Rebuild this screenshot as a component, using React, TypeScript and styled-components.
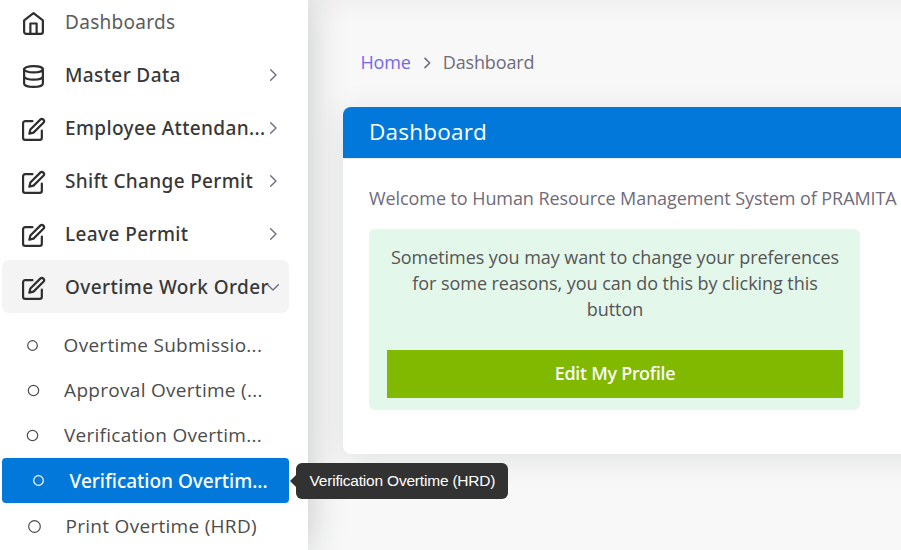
import React from "react";
import styled, { createGlobalStyle, css } from "styled-components";

const GlobalStyle = createGlobalStyle`
  * { box-sizing: border-box; }
  html, body { margin: 0; height: 100%; overflow: hidden; }
  body { background: #f8f8f8; font-family: "Open Sans", "Noto Sans", sans-serif; }
`;

const Page = styled.div`
  display: flex;
  width: 901px;
  height: 550px;
  overflow: hidden;
`;

const Sidebar = styled.nav`
  position: relative;
  z-index: 2;
  flex: 0 0 308px;
  height: 550px;
  padding-left: 2px;
  background: #fff;
  box-shadow: 0 0 36px 0 rgba(20, 32, 30, 0.23);
`;

const MenuList = styled.div`
  display: flex;
  flex-direction: column;
  width: 287px;
  margin-top: -5px;
`;

const MenuRow = styled.a<{ $open?: boolean }>`
  display: flex;
  align-items: center;
  height: 53px;
  padding: 0 8px 0 19px;
  border-radius: 7px;
  background: ${(p) => (p.$open ? "#f4f4f4" : "transparent")};
  color: #333;
`;

const MenuIcon = styled.svg`
  flex: none;
  width: 25px;
  height: 25px;
  margin: 3px 19px 0 0;
  fill: none;
  stroke: #2e2e2e;
  stroke-width: 2.1;
  stroke-linecap: round;
  stroke-linejoin: round;
`;

const MenuLabel = styled.span<{ $light?: boolean; $spacing?: number }>`
  flex: 1;
  white-space: nowrap;
  font-family: "Noto Sans", "Open Sans", sans-serif;
  font-size: 19px;
  line-height: 26px;
  font-weight: ${(p) => (p.$light ? 400 : 500)};
  color: ${(p) => (p.$light ? "#5c5c5c" : "#383838")};
  letter-spacing: ${(p) => p.$spacing ?? 0.35}px;
`;

const Chevron = styled.svg`
  flex: none;
  width: 16px;
  height: 16px;
  margin-left: -20px;
  fill: none;
  stroke: #6e6b7b;
  stroke-width: 2;
  stroke-linecap: round;
  stroke-linejoin: round;
`;

const SubList = styled.div`
  display: flex;
  flex-direction: column;
  width: 287px;
  margin-top: 10px;
`;

const SubRow = styled.a<{ $active?: boolean; $shift: number }>`
  display: flex;
  align-items: center;
  height: 45px;
  padding-left: ${(p) => 24 + p.$shift}px;
  color: #4c4c4c;
  ${(p) =>
    p.$active &&
    css`
      margin-bottom: 1px;
      border-radius: 4px;
      background: #0279da;
      color: #fff;
    `}
`;

const Bullet = styled.svg`
  flex: 0 0 13px;
  width: 13px;
  height: 13px;
  margin: -1px 25px 0 0;
  fill: none;
  stroke: currentColor;
  stroke-width: 1.2;
`;

const SubLabel = styled.span<{ $bold?: boolean; $spacing: number }>`
  white-space: nowrap;
  font-family: ${(p) => (p.$bold ? '"Noto Sans", "Open Sans"' : '"Open Sans", "Noto Sans"')}, sans-serif;
  font-size: 19px;
  line-height: 26px;
  margin-left: -0.4px;
  padding-bottom: ${(p) => (p.$bold ? 0 : 2)}px;
  font-weight: ${(p) => (p.$bold ? 500 : 400)};
  letter-spacing: ${(p) => p.$spacing}px;
`;

const Tooltip = styled.div`
  position: absolute;
  left: 296px;
  top: 463px;
  width: 212px;
  height: 36px;
  padding-left: 13.5px;
  border-radius: 6px;
  background: #323232;
  color: #fff;
  font: 15.5px/35px "Liberation Sans", Arial, sans-serif;
  letter-spacing: -0.2px;
  white-space: nowrap;
  &::before {
    content: "";
    position: absolute;
    left: -6px;
    top: 12px;
    border: 6px solid transparent;
    border-left: 0;
    border-right-color: #323232;
  }
`;

const Main = styled.main`
  flex: 1;
  min-width: 0;
  padding: 49px 0 0 35px;
  background: linear-gradient(#f1f1f1, #f8f8f8 24px);
`;

const Breadcrumb = styled.div`
  display: flex;
  align-items: center;
  height: 26px;
  margin: 0 0 32px 17.5px;
  font-size: 18px;
  line-height: 26px;
  letter-spacing: -0.15px;
  color: #6e6b7b;
`;

const HomeLink = styled.a`
  color: #7367f0;
`;

const CrumbArrow = styled.svg`
  width: 16px;
  height: 16px;
  margin: 1px 8px 0;
  fill: none;
  stroke: #6e6b7b;
  stroke-width: 2.4;
  stroke-linecap: round;
  stroke-linejoin: round;
`;

const Card = styled.section`
  width: 620px;
  height: 347px;
  border-radius: 8px;
  background: #fff;
  box-shadow: 0 5px 32px rgba(20, 32, 30, 0.11);
`;

const CardHeader = styled.h1`
  height: 51px;
  margin: 0;
  padding-left: 26px;
  border-radius: 8px 8px 0 0;
  background: #0279da;
  box-shadow: 0 1px 0 #ebe9f1;
  color: #fff;
  font-size: 22.5px;
  font-weight: 400;
  line-height: 50px;
  letter-spacing: 0.22px;
`;

const CardBody = styled.div`
  padding: 27px 26px 0;
`;

const Welcome = styled.p`
  margin: 0 0 18px;
  font-size: 18px;
  line-height: 26px;
  letter-spacing: -0.08px;
  color: #6e6b7b;
  white-space: nowrap;
`;

const Notice = styled.div`
  width: 491px;
  height: 181px;
  padding: 15px 17px 0 18px;
  border-radius: 6px;
  background: #e4f7eb;
`;

const NoticeText = styled.p`
  margin: 0 0 28px;
  color: #555;
  font-size: 18px;
  line-height: 26px;
  letter-spacing: -0.06px;
  text-align: center;
`;

const ProfileButton = styled.button`
  display: block;
  width: 456px;
  height: 48px;
  padding: 0 0 2px;
  border: 0;
  background: #81b900;
  color: #fff;
  font-family: "Noto Sans", "Open Sans", sans-serif;
  font-size: 18px;
  font-weight: 500;
  line-height: 26px;
  letter-spacing: -0.22px;
`;

const HomeIcon = () => (
  <MenuIcon viewBox="0 0 24 24">
    <path d="M3 9l9-7 9 7v11a2 2 0 0 1-2 2H5a2 2 0 0 1-2-2z" />
    <path d="M9 22V12h6v10" />
  </MenuIcon>
);

const DatabaseIcon = () => (
  <MenuIcon viewBox="0 0 24 24">
    <ellipse cx="12" cy="5" rx="9" ry="3" />
    <path d="M21 12c0 1.66-4 3-9 3s-9-1.34-9-3" />
    <path d="M3 5v14c0 1.66 4 3 9 3s9-1.34 9-3V5" />
  </MenuIcon>
);

const EditIcon = () => (
  <MenuIcon viewBox="0 0 24 24">
    <path d="M11 4H4a2 2 0 0 0-2 2v14a2 2 0 0 0 2 2h14a2 2 0 0 0 2-2v-7" />
    <path d="M18.5 2.5a2.121 2.121 0 0 1 3 3L12 15l-4 1 1-4 9.5-9.5z" />
  </MenuIcon>
);

const menu = [
  { label: "Dashboards", icon: HomeIcon, light: true, spacing: 0.3 },
  { label: "Master Data", icon: DatabaseIcon, arrow: "right", spacing: 0.38 },
  { label: "Employee Attendan...", icon: EditIcon, arrow: "right", spacing: 0.36 },
  { label: "Shift Change Permit", icon: EditIcon, arrow: "right", spacing: 0.33 },
  { label: "Leave Permit", icon: EditIcon, arrow: "right", spacing: 0.4 },
  { label: "Overtime Work Order", icon: EditIcon, arrow: "down", spacing: 0.42, open: true },
];

const submenu = [
  { label: "Overtime Submissio...", shift: 0, size: 4.8, spacing: 0.27 },
  { label: "Approval Overtime (...", shift: 0.5, size: 5.2, spacing: 0.29 },
  { label: "Verification Overtim...", shift: 0.3, size: 5.2, spacing: 0.27 },
  { label: "Verification Overtim...", shift: 6, size: 4.8, spacing: 0, active: true },
  { label: "Print Overtime (HRD)", shift: 1.9, size: 5.8, spacing: 0.29 },
];

export default function App() {
  return (
    <>
      <GlobalStyle />
      <Page>
        <Sidebar>
          <MenuList>
            {menu.map(({ label, icon: Icon, light, arrow, spacing, open }) => (
              <MenuRow key={label} $open={open}>
                <Icon />
                <MenuLabel $light={light} $spacing={spacing}>{label}</MenuLabel>
                {arrow && (
                  <Chevron viewBox="0 0 24 24">
                    <path d={arrow === "down" ? "M4 8.5l8 8 8-8" : "M8.5 4l8 8-8 8"} />
                  </Chevron>
                )}
              </MenuRow>
            ))}
          </MenuList>
          <SubList>
            {submenu.map((item, i) => (
              <SubRow key={i} $active={item.active} $shift={item.shift}>
                <Bullet viewBox="0 0 13 13">
                  <circle cx="6.5" cy="6.5" r={item.size} />
                </Bullet>
                <SubLabel $bold={item.active} $spacing={item.spacing}>{item.label}</SubLabel>
              </SubRow>
            ))}
          </SubList>
          <Tooltip role="tooltip">Verification Overtime (HRD)</Tooltip>
        </Sidebar>
        <Main>
          <Breadcrumb>
            <HomeLink>Home</HomeLink>
            <CrumbArrow viewBox="0 0 24 24">
              <path d="M9 5l7 7-7 7" />
            </CrumbArrow>
            <span>Dashboard</span>
          </Breadcrumb>
          <Card>
            <CardHeader>Dashboard</CardHeader>
            <CardBody>
              <Welcome>Welcome to Human Resource Management System of PRAMITA</Welcome>
              <Notice>
                <NoticeText>
                  Sometimes you may want to change your preferences for some reasons, you can do
                  this by clicking this button
                </NoticeText>
                <ProfileButton>Edit My Profile</ProfileButton>
              </Notice>
            </CardBody>
          </Card>
        </Main>
      </Page>
    </>
  );
}
